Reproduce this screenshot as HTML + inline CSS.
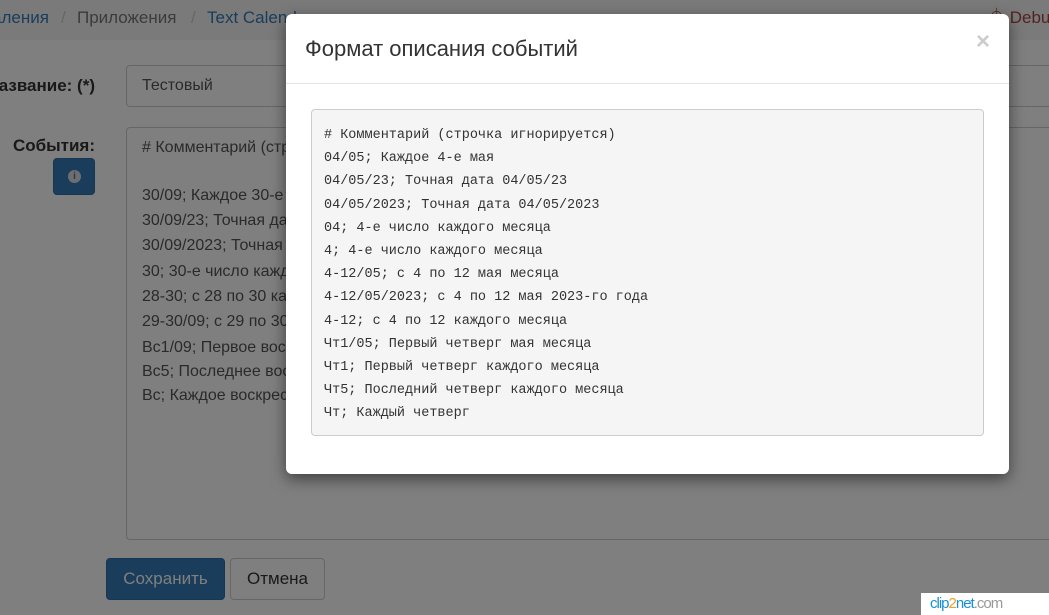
<!DOCTYPE html>
<html><head><meta charset="utf-8"><style>
*{box-sizing:border-box;margin:0;padding:0}
body{width:1049px;height:615px;overflow:hidden;background:#fff;font-family:"Liberation Sans",sans-serif;font-size:16px;color:#333;position:relative}
.bc{position:absolute;left:0;top:0;width:1049px;height:40px;background:#f5f5f5;font-size:17px;line-height:36px;white-space:nowrap}
.bc span{position:absolute;top:0}
.a{color:#337ab7}.sep{color:#ccc}
.lbl{position:absolute;font-weight:bold;color:#333;font-size:17px;text-align:right;right:954px;white-space:nowrap}
.inp{position:absolute;border:1px solid #ccc;border-radius:4px;background:#fff;color:#555;font-size:16px}
.ln{position:absolute;left:15px;white-space:nowrap}
.btn{position:absolute;border-radius:4px;font-size:17px;text-align:center;line-height:40px}
.ov{position:absolute;left:0;top:0;width:1049px;height:615px;background:rgba(0,0,0,.5)}
.modal{position:absolute;left:286px;top:14px;width:723px;height:460px;background:#fff;border-radius:6px;box-shadow:0 5px 15px rgba(0,0,0,.5)}
.mh{height:70px;border-bottom:1px solid #e5e5e5;position:relative}
.mh h4{position:absolute;left:19px;top:22px;font-size:22px;font-weight:normal;color:#333}
.x{position:absolute;right:19px;top:14px;font-size:24px;font-weight:bold;color:#ccc}
pre{position:absolute;left:25px;top:95px;width:673px;height:327px;background:#f5f5f5;border:1px solid #ccc;border-radius:4px;padding:14px 12px 0;font-family:"Liberation Mono",monospace;font-size:13.5px;line-height:23.2px;color:#333}
.wm{position:absolute;left:921px;top:593px;width:128px;height:22px;background:#fff;font-size:15px;line-height:22px;padding-left:9px;color:#1a8fd6;letter-spacing:-1px}
</style></head><body>
<div class="bc"><span class="a" style="left:-8px">аления</span><span class="sep" style="left:61px">/</span><span style="left:77px;color:#777">Приложения</span><span class="sep" style="left:191px">/</span><span class="a" style="left:207px">Text Calendar</span><span style="left:988px;color:#a94442">⏀ Debug</span></div>
<div class="lbl" style="top:76px">азвание: (*)</div>
<div class="inp" style="left:126px;top:65px;width:950px;height:42px"><span class="ln" style="top:11px">Тестовый</span></div>
<div class="lbl" style="top:136px">События:</div>
<div style="position:absolute;left:53px;top:158px;width:42px;height:37px;background:#337ab7;border:1px solid #2e6da4;border-radius:4px"><div style="position:absolute;left:14px;top:11px;width:13px;height:13px;border-radius:50%;background:#ddd;color:#337ab7;font-size:10px;font-weight:bold;text-align:center;line-height:13px">i</div></div>
<div class="inp" style="left:126px;top:127px;width:950px;height:413px">
<div class="ln" style="top:11px">#&nbsp;Комментарий (строчка игнорируется)</div>
<div class="ln" style="top:59px">30/09; Каждое 30-е сентября</div>
<div class="ln" style="top:84px">30/09/23; Точная дата</div>
<div class="ln" style="top:109px">30/09/2023; Точная дата</div>
<div class="ln" style="top:135px">30; 30-е число каждого</div>
<div class="ln" style="top:160px">28-30; с 28 по 30 каждого</div>
<div class="ln" style="top:185px">29-30/09; с 29 по 30</div>
<div class="ln" style="top:211px">Вс1/09; Первое воскресенье</div>
<div class="ln" style="top:235px">Вс5; Последнее воскресенье</div>
<div class="ln" style="top:259px">Вс; Каждое воскресенье</div>
</div>
<div class="btn" style="left:106px;top:558px;width:119px;height:42px;background:#337ab7;border:1px solid #2e6da4;color:#fff">Сохранить</div>
<div class="btn" style="left:230px;top:558px;width:95px;height:42px;background:#fff;border:1px solid #ccc;color:#333">Отмена</div>
<div class="ov"></div>
<div class="modal">
<div class="mh"><h4>Формат описания событий</h4><div class="x">×</div></div>
<pre># Комментарий (строчка игнорируется)
04/05; Каждое 4-е мая
04/05/23; Точная дата 04/05/23
04/05/2023; Точная дата 04/05/2023
04; 4-е число каждого месяца
4; 4-е число каждого месяца
4-12/05; с 4 по 12 мая месяца
4-12/05/2023; с 4 по 12 мая 2023-го года
4-12; с 4 по 12 каждого месяца
Чт1/05; Первый четверг мая месяца
Чт1; Первый четверг каждого месяца
Чт5; Последний четверг каждого месяца
Чт; Каждый четверг</pre>
</div>
<div class="wm">clip<span style="color:#f0a020">2</span>net<span style="color:#999">.com</span></div>
</body></html>
